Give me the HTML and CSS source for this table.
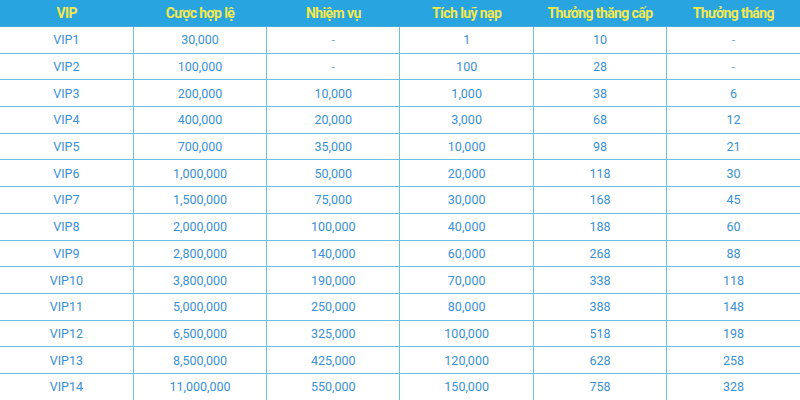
FILE: index.html
```html
<!DOCTYPE html>
<html lang="vi">
<head>
<meta charset="utf-8">
<link rel="stylesheet" href="styles.css">
</head>
<body>
<table class="vip">
<thead>
<tr><th>VIP</th><th>Cược hợp lệ</th><th>Nhiệm vụ</th><th>Tích luỹ nạp</th><th>Thưởng thăng cấp</th><th>Thưởng tháng</th></tr>
</thead>
<tbody>
<tr><td>VIP1</td><td>30,000</td><td class="dash">-</td><td>1</td><td>10</td><td class="dash">-</td></tr>
<tr><td>VIP2</td><td>100,000</td><td class="dash">-</td><td>100</td><td>28</td><td class="dash">-</td></tr>
<tr><td>VIP3</td><td>200,000</td><td>10,000</td><td>1,000</td><td>38</td><td>6</td></tr>
<tr><td>VIP4</td><td>400,000</td><td>20,000</td><td>3,000</td><td>68</td><td>12</td></tr>
<tr><td>VIP5</td><td>700,000</td><td>35,000</td><td>10,000</td><td>98</td><td>21</td></tr>
<tr><td>VIP6</td><td>1,000,000</td><td>50,000</td><td>20,000</td><td>118</td><td>30</td></tr>
<tr><td>VIP7</td><td>1,500,000</td><td>75,000</td><td>30,000</td><td>168</td><td>45</td></tr>
<tr><td>VIP8</td><td>2,000,000</td><td>100,000</td><td>40,000</td><td>188</td><td>60</td></tr>
<tr><td>VIP9</td><td>2,800,000</td><td>140,000</td><td>60,000</td><td>268</td><td>88</td></tr>
<tr><td>VIP10</td><td>3,800,000</td><td>190,000</td><td>70,000</td><td>338</td><td>118</td></tr>
<tr><td>VIP11</td><td>5,000,000</td><td>250,000</td><td>80,000</td><td>388</td><td>148</td></tr>
<tr><td>VIP12</td><td>6,500,000</td><td>325,000</td><td>100,000</td><td>518</td><td>198</td></tr>
<tr><td>VIP13</td><td>8,500,000</td><td>425,000</td><td>120,000</td><td>628</td><td>258</td></tr>
<tr><td>VIP14</td><td>11,000,000</td><td>550,000</td><td>150,000</td><td>758</td><td>328</td></tr>
</tbody>
</table>
</body>
</html>
```
FILE: styles.css
```css
html, body {
  margin: 0;
  padding: 0;
  background: #ffffff;
  overflow: hidden;
}
.vip {
  width: 800px;
  border-collapse: collapse;
  table-layout: fixed;
  font-family: Roboto, "Liberation Sans", sans-serif;
}
.vip th {
  background: #28a5e0;
  color: #f3e84e;
  font-weight: 700;
  font-size: 14px;
  letter-spacing: -0.6px;
  height: 26px;
  padding: 0;
  border-bottom: 1px solid #4aa9d6;
  text-align: center;
}
.vip td {
  height: 25.7px;
  padding: 0;
  text-align: center;
  color: #3a90d5;
  font-size: 12.5px;
  border: 1px solid #6cc0e8;
  border-top: none;
}
.vip td:first-child { border-left: none; }
.vip td:last-child { border-right: none; }
.vip td.dash { color: #8aa9c4; }
```
